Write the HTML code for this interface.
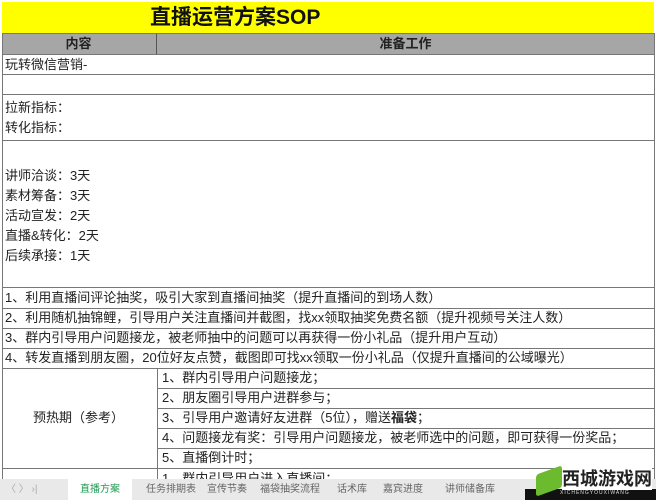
<!DOCTYPE html>
<html><head><meta charset="utf-8"><style>
*{margin:0;padding:0;box-sizing:border-box}
body{width:656px;height:500px;overflow:hidden;background:#fff;position:relative;font-family:"Liberation Sans","Noto Sans CJK SC",sans-serif;color:#222;font-size:13px}
.a{position:absolute;white-space:nowrap}
.h{position:absolute;height:1px;background:#777}
.v{position:absolute;width:1px;background:#777}
.t{position:absolute;left:5px;line-height:20px}
</style></head><body>
<div class="a" style="left:2px;top:2px;width:652px;height:31px;background:#ffff00"></div>
<div class="a" style="left:150px;top:2px;width:170px;line-height:31px;text-align:center;font-size:21px;font-weight:bold;color:#111">直播运营方案SOP</div>
<div class="a" style="left:2px;top:33px;width:652px;height:21px;background:#a6a6a6"></div>
<div class="a" style="left:0;top:33px;width:157px;line-height:21px;text-align:center;font-weight:bold">内容</div>
<div class="a" style="left:157px;top:33px;width:497px;line-height:21px;text-align:center;font-weight:bold">准备工作</div>
<div class="v" style="left:156px;top:33px;height:21px;background:#555"></div>
<div class="h" style="left:2px;top:33px;width:652px"></div>
<div class="h" style="left:2px;top:54px;width:652px"></div>
<div class="t" style="top:55px">玩转微信营销-</div>
<div class="h" style="left:2px;top:74px;width:652px"></div>
<div class="h" style="left:2px;top:94px;width:652px"></div>
<div class="t" style="top:98px">拉新指标：<br>转化指标：</div>
<div class="h" style="left:2px;top:140px;width:652px"></div>
<div class="t" style="top:166px">讲师洽谈：3天<br>素材筹备：3天<br>活动宣发：2天<br>直播&amp;转化：2天<br>后续承接：1天</div>
<div class="h" style="left:2px;top:287px;width:652px"></div>
<div class="t" style="top:288px">1、利用直播间评论抽奖，吸引大家到直播间抽奖（提升直播间的到场人数）</div>
<div class="h" style="left:2px;top:308px;width:652px"></div>
<div class="t" style="top:308px">2、利用随机抽锦鲤，引导用户关注直播间并截图，找xx领取抽奖免费名额（提升视频号关注人数）</div>
<div class="h" style="left:2px;top:328px;width:652px"></div>
<div class="t" style="top:328px">3、群内引导用户问题接龙，被老师抽中的问题可以再获得一份小礼品（提升用户互动）</div>
<div class="h" style="left:2px;top:348px;width:652px"></div>
<div class="t" style="top:348px">4、转发直播到朋友圈，20位好友点赞，截图即可找xx领取一份小礼品（仅提升直播间的公域曝光）</div>
<div class="h" style="left:2px;top:368px;width:652px"></div>
<div class="v" style="left:157px;top:368px;height:112px"></div>
<div class="a" style="left:0;top:408px;width:157px;line-height:20px;text-align:center">预热期（参考）</div>
<div class="a" style="left:162px;top:368px;line-height:20px">1、群内引导用户问题接龙；</div>
<div class="h" style="left:157px;top:388px;width:497px"></div>
<div class="a" style="left:162px;top:388px;line-height:20px">2、朋友圈引导用户进群参与；</div>
<div class="h" style="left:157px;top:408px;width:497px"></div>
<div class="a" style="left:162px;top:408px;line-height:20px">3、引导用户邀请好友进群（5位），赠送<b>福袋</b>；</div>
<div class="h" style="left:157px;top:428px;width:497px"></div>
<div class="a" style="left:162px;top:428px;line-height:20px">4、问题接龙有奖：引导用户问题接龙，被老师选中的问题，即可获得一份奖品；</div>
<div class="h" style="left:157px;top:448px;width:497px"></div>
<div class="a" style="left:162px;top:448px;line-height:20px">5、直播倒计时；</div>
<div class="h" style="left:2px;top:468px;width:652px"></div>
<div class="a" style="left:162px;top:469px;line-height:20px">1、群内引导用户进入直播间；</div>
<div class="v" style="left:2px;top:33px;height:447px"></div>
<div class="v" style="left:654px;top:33px;height:447px"></div>
<div class="a" style="left:0;top:479px;width:656px;height:21px;background:#e9e9e9;font-size:10px;color:#666;line-height:21px">
<span class="a" style="left:6px;color:#aaa">〈 〉 ›|</span>
<span class="a" style="left:68px;width:64px;height:21px;background:#fff;color:#1e9b50;text-align:center">直播方案</span>
<span class="a" style="left:146px">任务排期表</span>
<span class="a" style="left:207px">宣传节奏</span>
<span class="a" style="left:260px">福袋抽奖流程</span>
<span class="a" style="left:337px">话术库</span>
<span class="a" style="left:383px">嘉宾进度</span>
<span class="a" style="left:445px">讲师储备库</span>
</div>
<div class="a" style="left:525px;top:489px;width:131px;height:11px;background:#111"></div>
<div class="a" style="left:536px;top:470px;width:26px;height:22px;background:#6cbb2f;transform:skewY(-20deg);border-radius:3px"></div>
<div class="a" style="left:562px;top:468px;font-size:18px;font-weight:bold;color:#222;background:#fff;line-height:22px">西城游戏网</div>
<div class="a" style="left:560px;top:490px;font-size:5px;color:#ddd;letter-spacing:1px">XICHENGYOUXIWANG</div>
</body></html>
